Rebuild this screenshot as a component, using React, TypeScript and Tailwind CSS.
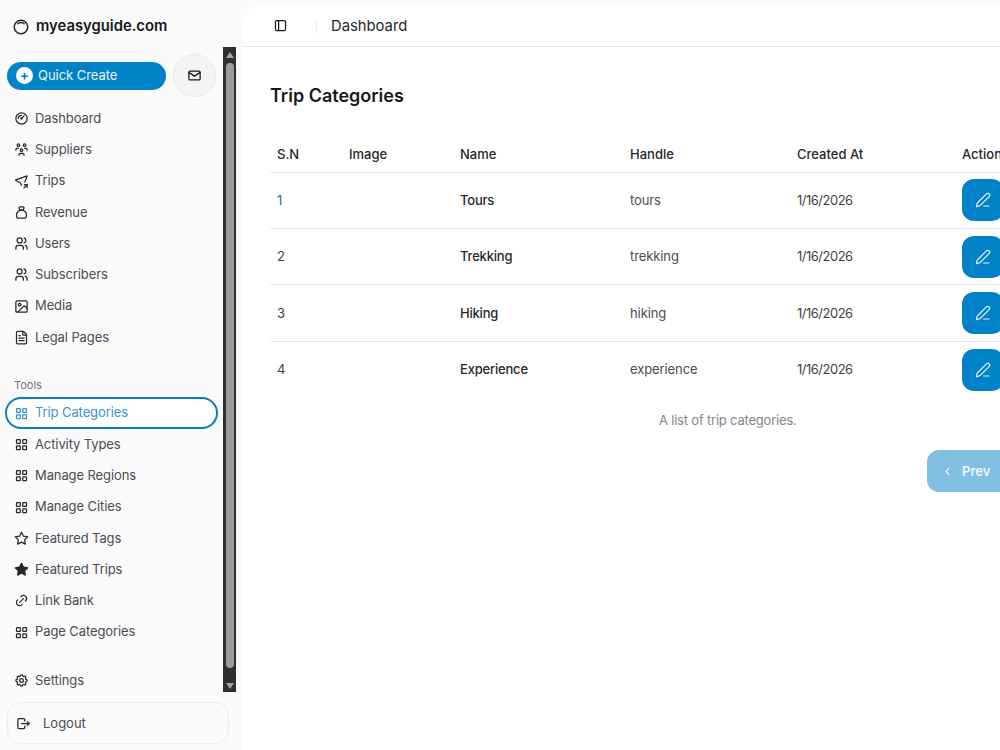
import {
  TbInnerShadowTop,
  TbMail,
  TbGauge,
  TbUsersGroup,
  TbLocationShare,
  TbMoneybag,
  TbUsers,
  TbLayoutGrid,
  TbStar,
  TbStarFilled,
  TbLink,
  TbSettings,
  TbLogout,
  TbLayoutSidebar,
  TbChevronLeft,
} from "react-icons/tb";
import { Image, FileText, PenLine } from "lucide-react";

const MAIN_NAV = [
  { label: "Dashboard", icon: TbGauge },
  { label: "Suppliers", icon: TbUsersGroup },
  { label: "Trips", icon: TbLocationShare },
  { label: "Revenue", icon: TbMoneybag },
  { label: "Users", icon: TbUsers },
  { label: "Subscribers", icon: TbUsers },
  { label: "Media", icon: Image },
  { label: "Legal Pages", icon: FileText },
];

const TOOLS_NAV = [
  { label: "Activity Types", icon: TbLayoutGrid },
  { label: "Manage Regions", icon: TbLayoutGrid },
  { label: "Manage Cities", icon: TbLayoutGrid },
  { label: "Featured Tags", icon: TbStar },
  { label: "Featured Trips", icon: TbStarFilled },
  { label: "Link Bank", icon: TbLink },
  { label: "Page Categories", icon: TbLayoutGrid },
];

const ROWS = [
  { id: 1, name: "Tours", handle: "tours" },
  { id: 2, name: "Trekking", handle: "trekking" },
  { id: 3, name: "Hiking", handle: "hiking" },
  { id: 4, name: "Experience", handle: "experience" },
];

function NavItem({ label, icon: Icon }: { label: string; icon: React.ElementType }) {
  return (
    <a className="flex h-[31.25px] items-center gap-[6px] pl-[7px] text-[13px] tracking-[-0.1px] text-[#4c4c55]">
      <Icon className="size-[15px] shrink-0 text-[#27272a]" />
      {label}
    </a>
  );
}

export default function App() {
  return (
    <div className="flex h-[750px] w-[1000px] overflow-hidden bg-[#fafafa] font-['Inter',sans-serif] text-[#27272a]">
      <aside className="flex w-[243px] shrink-0 flex-col">
        <div className="flex h-[47px] items-center gap-[6px] pt-[6px] pl-[12px]">
          <TbInnerShadowTop className="size-[18px]" />
          <span className="text-[14.8px] font-semibold text-[#18181b]">myeasyguide.com</span>
        </div>

        <div className="flex h-[645px]">
          <div className="w-[223px] shrink-0 pl-[7px]">
            <div className="flex items-center gap-[7px] pt-[7px]">
              <button className="flex h-[28px] w-[159px] items-center gap-[5px] rounded-full bg-[#0082c6] pl-[9px] text-[13px] tracking-[-0.05px] text-[#e8f4fb]">
                <span className="flex size-[17px] items-center justify-center rounded-full bg-white text-[13px] leading-none font-bold text-[#0082c6]">+</span>
                Quick Create
              </button>
              <button className="flex size-[43px] items-center justify-center rounded-full border border-[#e9e9e9] bg-[#f4f4f5]">
                <TbMail className="size-[15px] text-[#18181b]" />
              </button>
            </div>

            <nav className="mt-[6px]">
              {MAIN_NAV.map((item) => (
                <NavItem key={item.label} {...item} />
              ))}
            </nav>

            <div className="mt-[22px] mb-[2px] h-[20px] pl-[7px] text-[11px] leading-[20px] text-[#6f6f78]">Tools</div>

            <a className="-ml-[2px] flex h-[32px] w-[213px] items-center gap-[6px] rounded-full border-2 border-[#0a7bc4] bg-white pl-[7px] text-[13px] tracking-[-0.1px] text-[#3b95d3]">
              <TbLayoutGrid className="size-[15px] shrink-0 text-[#2f8fd0]" />
              Trip Categories
            </a>

            <nav>
              {TOOLS_NAV.map((item) => (
                <NavItem key={item.label} {...item} />
              ))}
            </nav>

            <div className="mt-[17px]">
              <NavItem label="Settings" icon={TbSettings} />
            </div>
          </div>

          <div className="flex w-[13px] shrink-0 flex-col items-center bg-[#2f2f2f]">
            <div className="mt-[5px] size-0 border-x-[4px] border-b-[6px] border-x-transparent border-b-[#a3a3a3]" />
            <div className="mt-[5px] h-[605px] w-[8px] rounded-full bg-[#9c9c9c]" />
            <div className="mt-[15px] size-0 border-x-[4px] border-t-[6px] border-x-transparent border-t-[#a3a3a3]" />
          </div>
        </div>

        <div className="mt-[10px] ml-[7px] flex h-[42px] w-[222px] items-center gap-[12px] rounded-[14px] border border-[#ececec] pt-[1px] pl-[8px] text-[13px] text-[#4c4c55]">
          <TbLogout className="size-[15px] text-[#27272a]" />
          Logout
        </div>
      </aside>

      <main className="mt-[5px] min-w-0 flex-1 overflow-hidden rounded-tl-[20px] bg-white">
        <header className="flex h-[42px] items-center border-b border-[#e8e8e8]">
          <TbLayoutSidebar className="ml-[30px] size-[15px] text-[#18181b]" />
          <span className="ml-[28px] h-[14px] w-px bg-[#ececec]" />
          <span className="ml-[14px] pt-[1px] text-[14.8px] text-[#27272a]">Dashboard</span>
        </header>

        <section className="w-[800px] pl-[27px]">
          <h1 className="mt-[37px] text-[18px] leading-[24px] font-semibold text-[#18181b]">Trip Categories</h1>

          <table className="mt-[23px] w-[760px] table-fixed text-left text-[13px]">
            <thead>
              <tr className="h-[41px] border-b border-[#e8e8e8] text-[#27272a]">
                <th className="w-[72px] pt-[6px] pl-[7px] font-medium">S.N</th>
                <th className="w-[111px] pt-[6px] pl-[7px] font-medium">Image</th>
                <th className="w-[170px] pt-[6px] pl-[7px] font-medium">Name</th>
                <th className="w-[167px] pt-[6px] pl-[7px] font-medium">Handle</th>
                <th className="w-[165px] pt-[6px] pl-[7px] font-medium">Created At</th>
                <th className="pt-[6px] pl-[7px] font-medium">Action</th>
              </tr>
            </thead>
            <tbody>
              {ROWS.map((row, i) => (
                <tr key={row.id} className={i < ROWS.length - 1 ? "h-[56.4px] border-b border-[#e8e8e8]" : "h-[56.4px]"}>
                  <td className={i === 0 ? "pt-[1px] pl-[7px] text-[#1f6f9f]" : "pt-[1px] pl-[7px] text-[#3f3f46]"}>{row.id}</td>
                  <td />
                  <td className="pt-[1px] pl-[7px] font-[550] tracking-[-0.2px] text-[#27272a]">{row.name}</td>
                  <td className="pt-[1px] pl-[7px] tracking-[-0.1px] text-[#4c4c55]">{row.handle}</td>
                  <td className="pt-[1px] pl-[7px] tracking-[-0.5px] text-[#3f3f46]">1/16/2026</td>
                  <td className="pl-[7px]">
                    <button className="flex h-[42px] w-[42px] items-center justify-center rounded-[12px] bg-[#0082c6]">
                      <PenLine strokeWidth={1.75} className="size-[16px] text-[#e8f4fb]" />
                    </button>
                  </td>
                </tr>
              ))}
            </tbody>
          </table>

          <p className="mt-[13px] pl-[389px] text-[13px] tracking-[-0.2px] whitespace-nowrap text-[#85858d]">A list of trip categories.</p>

          <div className="mt-[20px] flex pl-[657px]">
            <button className="flex h-[42px] w-[90px] items-center gap-[8px] rounded-[12px] bg-[#80bfe2] pt-[1px] pl-[14px] text-[13px] font-semibold text-[#eef7fc]">
              <TbChevronLeft className="size-[13px]" />
              Prev
            </button>
          </div>
        </section>
      </main>
    </div>
  );
}
